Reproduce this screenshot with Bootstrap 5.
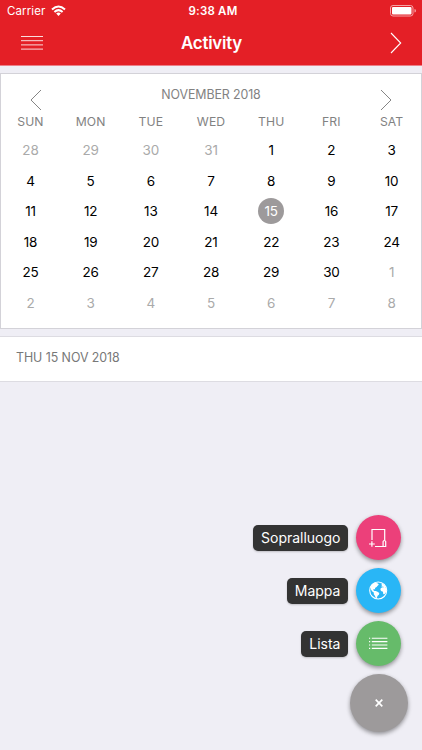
<!DOCTYPE html>
<html lang="en">
<head>
<meta charset="utf-8">
<meta name="viewport" content="width=device-width, initial-scale=1">
<title>Activity</title>
<link href="https://cdn.jsdelivr.net/npm/bootstrap@5.3.0/dist/css/bootstrap.min.css" rel="stylesheet">
<style>
html,body{height:100%}
body{font-family:Inter,"Liberation Sans",sans-serif;background:#efeef5;overflow:hidden}
svg{display:block;flex:none}
.screen{width:422px;height:750px}
.topbar{background:#e41f26;height:66px;border-bottom:1px solid #ec7f88}
.status{height:22px;padding:0 5px 0 7px;font-size:11.5px;line-height:22px}
.status>*{flex:1 1 0}
.carrier{letter-spacing:.1px}
.wifi-gap{gap:6px}
.clock{font-weight:600;font-size:11.5px;letter-spacing:.2px;padding-left:2px}
.titlebar{height:42px;padding:0 20px 0 21px}
.titlebar>*{flex:1 1 0}
.titlebar h1{font-size:16.9px;font-weight:600;line-height:44px;letter-spacing:-.25px}
.calendar{margin-top:7px;height:256px;border:1px solid #d3d2d8;padding-top:10px}
.month-bar{height:26px;padding:0 29px 0 29px;color:#828282}
.month-bar svg{margin-top:5px}
.month-name{font-size:12.4px;line-height:22px;letter-spacing:-.1px}
.week{display:grid;grid-template-columns:repeat(7,60.2px);justify-content:center;text-align:center}
.day-names{font-size:12.2px;line-height:24px;height:25px;color:#828282;letter-spacing:.1px}
.days{font-size:13.5px;font-weight:400;grid-auto-rows:30.55px;color:#000;letter-spacing:-.2px}
.days>span{display:flex;align-items:center;justify-content:center}
.days .other{color:#aaa}
.days .chosen{width:26px;height:26px;background:#9d9a9b;line-height:26px;font-weight:400}
.date-strip{margin-top:7px;height:46px;border-top:1px solid #dddce2;border-bottom:1px solid #dddce2;padding-left:16px;font-size:12.4px;line-height:41px;color:#787878;letter-spacing:-.05px}
.actions{right:14px;bottom:18px}
.action-row{gap:8px;margin-bottom:8px;padding-right:6.6px}
.tag{background:#333;height:26px;line-height:26px;border-radius:5px;padding:0 8px;font-size:14px;letter-spacing:-.02px;box-shadow:0 1px 2px #0003}
.fab{width:45px;height:45px;box-shadow:0 2px 4px #0006}
.pink{background:#ec407a}.blue{background:#29b6f6}.green{background:#66bb6a}
.close-fab{width:58px;height:58px;background:#9d9a9b;box-shadow:0 2px 4px #0006}
</style>
<script src="https://cdn.jsdelivr.net/npm/bootstrap@5.3.0/dist/js/bootstrap.bundle.min.js"></script>
</head>
<body>
<div class="screen position-relative d-flex flex-column">
<header class="topbar text-white flex-shrink-0">
  <div class="status d-flex align-items-center">
    <div class="wifi-gap d-flex align-items-center"><span class="carrier">Carrier</span>
      <svg width="15" height="12" viewBox="0 0 15 12" fill="none" stroke="#fff" stroke-width="2"><path d="M1 4.5Q7.5-1.5 14 4.5M3.4 7Q7.5 3.2 11.6 7"/><path d="M5.2 8.5Q7.5 6.5 9.8 8.5L7.5 11z" fill="#fff" stroke="none"/></svg>
    </div>
    <div class="clock text-center">9:38 AM</div>
    <div class="d-flex justify-content-end"><svg width="27" height="12" viewBox="0 0 27 12"><rect x=".5" y=".5" width="22.5" height="10.5" rx="2.5" fill="none" stroke="#f5a3a6"/><rect x="2" y="2" width="19.5" height="7.5" rx="1" fill="#fff"/><path d="M24.5 4q1.5.3 1.5 1.8t-1.5 1.8z" fill="#f5a3a6"/></svg></div>
  </div>
  <div class="titlebar d-flex align-items-center">
    <div><svg width="22" height="14" viewBox="0 0 22 14" stroke="#fbdcdd" stroke-width="1"><path d="M0 .5h22M0 4.7h22M0 8.9h22M0 13.1h22"/></svg></div>
    <h1 class="m-0 text-center">Activity</h1>
    <div class="d-flex justify-content-end"><svg width="12" height="22" viewBox="0 0 12 22" fill="none" stroke="#fff" stroke-width="1.1"><path d="M1 1l9.7 10L1 21"/></svg></div>
  </div>
</header>
<section class="calendar bg-white flex-shrink-0">
  <div class="month-bar d-flex justify-content-between align-items-start">
    <svg width="12" height="22" viewBox="0 0 12 22" fill="none" stroke="#858585"><path d="M11 1L1 11l10 10"/></svg>
    <div class="month-name">NOVEMBER 2018</div>
    <svg width="12" height="22" viewBox="0 0 12 22" fill="none" stroke="#858585"><path d="M1 1l10 10L1 21"/></svg>
  </div>
  <div class="week day-names"><span>SUN</span><span>MON</span><span>TUE</span><span>WED</span><span>THU</span><span>FRI</span><span>SAT</span></div>
  <div class="week days">
    <span class="other">28</span><span class="other">29</span><span class="other">30</span><span class="other">31</span><span>1</span><span>2</span><span>3</span>
    <span>4</span><span>5</span><span>6</span><span>7</span><span>8</span><span>9</span><span>10</span>
    <span>11</span><span>12</span><span>13</span><span>14</span><span><b class="chosen rounded-circle text-white">15</b></span><span>16</span><span>17</span>
    <span>18</span><span>19</span><span>20</span><span>21</span><span>22</span><span>23</span><span>24</span>
    <span>25</span><span>26</span><span>27</span><span>28</span><span>29</span><span>30</span><span class="other">1</span>
    <span class="other">2</span><span class="other">3</span><span class="other">4</span><span class="other">5</span><span class="other">6</span><span class="other">7</span><span class="other">8</span>
  </div>
</section>
<div class="date-strip bg-white flex-shrink-0">THU 15 NOV 2018</div>
<div class="actions position-absolute d-flex flex-column align-items-end">
  <div class="action-row d-flex align-items-center"><span class="tag text-white">Sopralluogo</span>
    <span class="fab pink rounded-circle d-flex align-items-center justify-content-center"><svg width="19" height="20" viewBox="0 0 19 20" fill="none" stroke="#fff" stroke-width="1.2"><path d="M3 12V1.5h12.7V12M6 18.5h9M0 16h5.8M2.9 13.2v5.6M14.1 18.5v-5q1.3-2 2.6 0v5z"/></svg></span></div>
  <div class="action-row d-flex align-items-center"><span class="tag text-white">Mappa</span>
    <span class="fab blue rounded-circle d-flex align-items-center justify-content-center"><svg width="19" height="19" viewBox="0 0 19 19"><circle cx="9.2" cy="9.5" r="8.5" fill="none" stroke="#fff" stroke-width="1.1"/><path fill="#fff" d="M1.6 6.2Q3 3 6 1.5L9 2.4 9.8 3.8 8.6 4.8 7.6 6 6 7l.2 1.4L4.8 8l-.6.9 1.2 1 1.4.1 1.7.7 1.8 1.3-.4 1.7-1.3 1-.7 2-1 .6-1-2.6-1.1-1.4V11.6L3.3 10.4 2 8.4zM11.4 2.4l2.7.6 2 2.2 1.1 2.6-.1 3.2-1.2 1.8-1 .8-.8-1.2-.1-1.7-1.5-.4-1.1-1.3.3-1.7 1.6-1 1.3.1-.4-.9-1.3.2-.6-.7 1-.9z"/></svg></span></div>
  <div class="action-row d-flex align-items-center"><span class="tag text-white">Lista</span>
    <span class="fab green rounded-circle d-flex align-items-center justify-content-center"><svg width="19" height="13" viewBox="0 0 19 13" stroke="#fff" stroke-width="1.15"><path d="M0 1.2h1.2M2.8 1.2h15.6M0 4.6h1.2M2.8 4.6h15.6M0 8h1.2M2.8 8h15.6M0 11.4h1.2M2.8 11.4h15.6"/></svg></span></div>
  <div class="close-fab rounded-circle d-flex align-items-center justify-content-center"><svg width="8" height="8" viewBox="0 0 8 8" stroke="#fff" stroke-width="1.7"><path d="M.7.7l6.6 6.6M7.3.7L.7 7.3"/></svg></div>
</div>
</div>
</body>
</html>
